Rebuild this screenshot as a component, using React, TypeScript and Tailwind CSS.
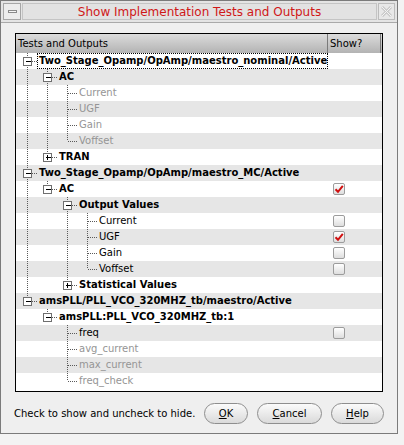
import React from 'react';

type Item = {
  label: string;
  bold?: boolean;
  dim?: boolean;
  open?: boolean;
  check?: boolean;
  focus?: boolean;
  children?: Item[];
};

const leaf = (label: string, extra: Partial<Item> = {}): Item => ({ label, ...extra });

const tree: Item[] = [
  {
    label: 'Two_Stage_Opamp/OpAmp/maestro_nominal/Active',
    bold: true,
    open: true,
    focus: true,
    children: [
      {
        label: 'AC',
        bold: true,
        open: true,
        children: [
          leaf('Current', { dim: true }),
          leaf('UGF', { dim: true }),
          leaf('Gain', { dim: true }),
          leaf('Voffset', { dim: true }),
        ],
      },
      { label: 'TRAN', bold: true, children: [leaf('x')] },
    ],
  },
  {
    label: 'Two_Stage_Opamp/OpAmp/maestro_MC/Active',
    bold: true,
    open: true,
    children: [
      {
        label: 'AC',
        bold: true,
        open: true,
        check: true,
        children: [
          {
            label: 'Output Values',
            bold: true,
            open: true,
            children: [
              leaf('Current', { check: false }),
              leaf('UGF', { check: true }),
              leaf('Gain', { check: false }),
              leaf('Voffset', { check: false }),
            ],
          },
          { label: 'Statistical Values', bold: true, children: [leaf('x')] },
        ],
      },
    ],
  },
  {
    label: 'amsPLL/PLL_VCO_320MHZ_tb/maestro/Active',
    bold: true,
    open: true,
    children: [
      {
        label: 'amsPLL:PLL_VCO_320MHZ_tb:1',
        bold: true,
        open: true,
        children: [
          leaf('freq', { check: false }),
          leaf('avg_current', { dim: true }),
          leaf('max_current', { dim: true }),
          leaf('freq_check', { dim: true }),
        ],
      },
    ],
  },
];

type Row = { item: Item; level: number; lasts: boolean[] };

function flatten(items: Item[], level: number, lasts: boolean[], out: Row[]) {
  items.forEach((item, i) => {
    const l = [...lasts, i === items.length - 1];
    out.push({ item, level, lasts: l });
    if (item.children && item.open) flatten(item.children, level + 1, l, out);
  });
}

const rows: Row[] = [];
flatten(tree, 0, [], rows);

const DOT = '#5a5a5a';

function Branches({ row }: { row: Row }) {
  const { level, lasts, item } = row;
  const w = 20 * (level + 1);
  const cx = 20 * level + 10.5;
  const hasKids = !!item.children;
  return (
    <svg width={w} height={16} className="shrink-0" shapeRendering="crispEdges">
      {lasts.slice(0, level).map((last, i) =>
        last ? null : (
          <line key={i} x1={20 * i + 10.5} y1={0} x2={20 * i + 10.5} y2={16} stroke={DOT} strokeDasharray="1 1" />
        ),
      )}
      <line x1={cx} y1={0} x2={cx} y2={lasts[level] ? 8 : 16} stroke={DOT} strokeDasharray="1 1" />
      <line x1={cx} y1={8.5} x2={w} y2={8.5} stroke={DOT} strokeDasharray="1 1" />
      {hasKids && (
        <g>
          <rect x={cx - 4} y={4.5} width={8} height={8} fill="#fff" stroke="#6f6f6f" />
          <line x1={cx - 2} y1={8.5} x2={cx + 3} y2={8.5} stroke="#000" />
          {!item.open && <line x1={cx + 0.5 - 0.5} y1={6} x2={cx} y2={11} stroke="#000" />}
        </g>
      )}
    </svg>
  );
}

function CheckBox({ checked }: { checked: boolean }) {
  return (
    <div className="flex h-[12px] w-[12px] items-center justify-center rounded-[2px] border border-[#9c9c9c] bg-gradient-to-b from-[#ffffff] to-[#dedede]">
      {checked && (
        <svg width="10" height="10" viewBox="0 0 10 10">
          <path d="M1.5 5.2 L4 7.8 L8.8 1.8" fill="none" stroke="#d01010" strokeWidth="2" />
        </svg>
      )}
    </div>
  );
}

function TitleBar() {
  return (
    <div className="flex h-[22px] shrink-0 items-stretch gap-[1px] border-b border-[#a9a9a9] bg-[#e4e4e4] px-[2px] py-[2px]">
      <div className="flex w-[18px] items-center justify-center border border-[#a6a6a6] bg-[#ececec]">
        <div className="h-[3px] w-[9px] border border-[#8a8a8a] bg-[#f6f6f6]" />
      </div>
      <div className="flex flex-1 items-center justify-center border border-[#c4c4c4] bg-[#e2e2e2] text-[12px] text-[#d01818]">
        Show Implementation Tests and Outputs
      </div>
      <div className="flex w-[17px] items-center justify-center border border-[#bcbcbc] bg-[#e8e8e8]">
        <svg width="11" height="11" viewBox="0 0 11 11">
          <path d="M1 1 L10 10 M10 1 L1 10" stroke="#c8c8c8" strokeWidth="3" />
          <path d="M1 1 L10 10 M10 1 L1 10" stroke="#f4f4f4" strokeWidth="1" />
        </svg>
      </div>
    </div>
  );
}

function Button({ label, u, w }: { label: string; u: number; w: string }) {
  return (
    <button
      className={`flex h-[21px] ${w} items-center justify-center rounded-full border border-[#8e8e8e] bg-gradient-to-b from-[#fbfbfb] to-[#dadada] text-[10px] text-black`}
    >
      {label.slice(0, u)}
      <span className="underline">{label[u]}</span>
      {label.slice(u + 1)}
    </button>
  );
}

export default function App() {
  return (
    <div
      className="h-[445px] w-[404px] bg-[#f3f3f3] text-black"
      style={{ fontFamily: '"DejaVu Sans", sans-serif' }}
    >
      <div className="flex h-[434px] w-[398px] flex-col border border-[#7b7b7b] bg-[#efefef]">
        <TitleBar />
        <div className="mx-[14px] mt-[10px] flex h-[359px] flex-col border border-black bg-white">
          <div className="flex h-[19px] shrink-0 items-stretch bg-gradient-to-b from-[#dcdcdc] to-[#b3b3b3] text-[10px]">
            <div className="flex w-[312px] items-center border-r border-[#7a7a7a] pl-[2px]">Tests and Outputs</div>
            <div className="flex w-[53px] items-center border-r border-[#7a7a7a] pl-[2px]">Show?</div>
          </div>
          {rows.map((row, i) => (
            <div
              key={i}
              className={`flex h-[16px] shrink-0 items-stretch text-[10px] leading-[16px] ${i % 2 ? 'bg-[#e6e6e6]' : 'bg-white'}`}
            >
              <div className="flex w-[312px] items-stretch pl-[1px]">
                <Branches row={row} />
                <div
                  className={`flex-1 whitespace-nowrap ${row.item.focus ? 'border border-dotted border-black pl-[1px] leading-[14px]' : 'pl-[2px]'} ${row.item.bold ? 'font-bold' : ''} ${row.item.dim ? 'text-[#959595]' : 'text-black'}`}
                >
                  {row.item.label}
                </div>
              </div>
              <div className="flex flex-1 items-center pl-[5px]">
                {row.item.check !== undefined && <CheckBox checked={row.item.check} />}
              </div>
            </div>
          ))}
        </div>
        <div className="mt-[11px] flex items-center px-[13px]">
          <div className="flex-1 text-[10px]">Check to show and uncheck to hide.</div>
          <div className="flex gap-[9px]">
            <Button label="OK" u={0} w="w-[44px]" />
            <Button label="Cancel" u={0} w="w-[65px]" />
            <Button label="Help" u={0} w="w-[53px]" />
          </div>
        </div>
      </div>
    </div>
  );
}
